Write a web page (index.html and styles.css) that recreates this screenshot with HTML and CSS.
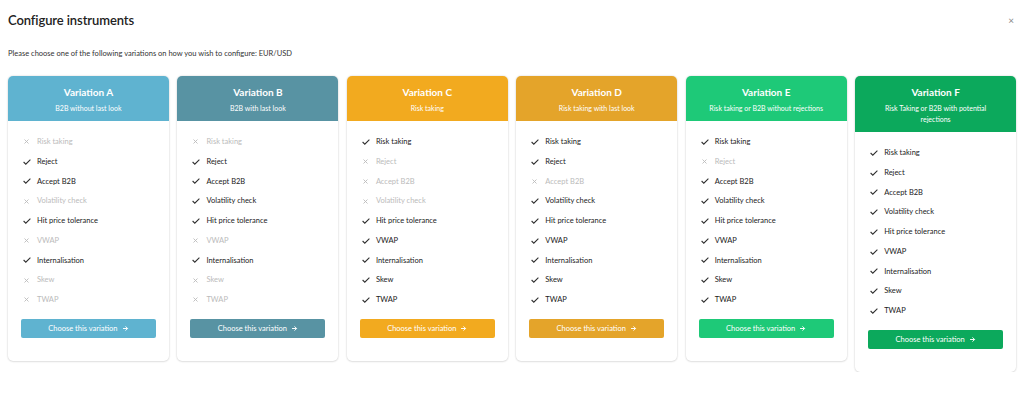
FILE: index.html
```html
<!DOCTYPE html>
<html>
<head>
<meta charset="utf-8">
<link rel="stylesheet" href="styles.css">
</head>
<body>
<div class="modal">
  <div class="top">
    <h1 class="title">Configure instruments</h1>
    <span class="close">×</span>
  </div>
  <p class="intro">Please choose one of the following variations on how you wish to configure: EUR/USD</p>
  <div class="cards">
    <div class="card a">
      <div class="head"><div class="name">Variation A</div><div class="desc">B2B without last look</div></div>
      <ul class="list">
        <li class="off">Risk taking</li><li>Reject</li><li>Accept B2B</li><li class="off">Volatility check</li><li>Hit price tolerance</li><li class="off">VWAP</li><li>Internalisation</li><li class="off">Skew</li><li class="off">TWAP</li>
      </ul>
      <button class="btn">Choose this variation <svg class="arr" viewBox="0 0 10 10"><path d="M1.5 5h6.5M5 2l3 3-3 3" fill="none" stroke="#fff" stroke-width="1.4"/></svg></button>
    </div>
    <div class="card b">
      <div class="head"><div class="name">Variation B</div><div class="desc">B2B with last look</div></div>
      <ul class="list">
        <li class="off">Risk taking</li><li>Reject</li><li>Accept B2B</li><li>Volatility check</li><li>Hit price tolerance</li><li class="off">VWAP</li><li>Internalisation</li><li class="off">Skew</li><li class="off">TWAP</li>
      </ul>
      <button class="btn">Choose this variation <svg class="arr" viewBox="0 0 10 10"><path d="M1.5 5h6.5M5 2l3 3-3 3" fill="none" stroke="#fff" stroke-width="1.4"/></svg></button>
    </div>
    <div class="card c">
      <div class="head"><div class="name">Variation C</div><div class="desc">Risk taking</div></div>
      <ul class="list">
        <li>Risk taking</li><li class="off">Reject</li><li class="off">Accept B2B</li><li class="off">Volatility check</li><li>Hit price tolerance</li><li>VWAP</li><li>Internalisation</li><li>Skew</li><li>TWAP</li>
      </ul>
      <button class="btn">Choose this variation <svg class="arr" viewBox="0 0 10 10"><path d="M1.5 5h6.5M5 2l3 3-3 3" fill="none" stroke="#fff" stroke-width="1.4"/></svg></button>
    </div>
    <div class="card d">
      <div class="head"><div class="name">Variation D</div><div class="desc">Risk taking with last look</div></div>
      <ul class="list">
        <li>Risk taking</li><li>Reject</li><li class="off">Accept B2B</li><li>Volatility check</li><li>Hit price tolerance</li><li>VWAP</li><li>Internalisation</li><li>Skew</li><li>TWAP</li>
      </ul>
      <button class="btn">Choose this variation <svg class="arr" viewBox="0 0 10 10"><path d="M1.5 5h6.5M5 2l3 3-3 3" fill="none" stroke="#fff" stroke-width="1.4"/></svg></button>
    </div>
    <div class="card e">
      <div class="head"><div class="name">Variation E</div><div class="desc">Risk taking or B2B without rejections</div></div>
      <ul class="list">
        <li>Risk taking</li><li class="off">Reject</li><li>Accept B2B</li><li>Volatility check</li><li>Hit price tolerance</li><li>VWAP</li><li>Internalisation</li><li>Skew</li><li>TWAP</li>
      </ul>
      <button class="btn">Choose this variation <svg class="arr" viewBox="0 0 10 10"><path d="M1.5 5h6.5M5 2l3 3-3 3" fill="none" stroke="#fff" stroke-width="1.4"/></svg></button>
    </div>
    <div class="card f">
      <div class="head"><div class="name">Variation F</div><div class="desc">Risk Taking or B2B with potential<br>rejections</div></div>
      <ul class="list">
        <li>Risk taking</li><li>Reject</li><li>Accept B2B</li><li>Volatility check</li><li>Hit price tolerance</li><li>VWAP</li><li>Internalisation</li><li>Skew</li><li>TWAP</li>
      </ul>
      <button class="btn">Choose this variation <svg class="arr" viewBox="0 0 10 10"><path d="M1.5 5h6.5M5 2l3 3-3 3" fill="none" stroke="#fff" stroke-width="1.4"/></svg></button>
    </div>
  </div>
</div>
</body>
</html>
```
FILE: styles.css
```css
* { box-sizing: border-box; }
body {
  margin: 0;
  background: #fff;
  font-family: Lato, "Open Sans", sans-serif;
  color: #222;
}
.modal { padding: 0 8px; }
.top {
  display: flex;
  justify-content: space-between;
  align-items: center;
  height: 40px;
}
.title {
  margin: 0;
  font-size: 13px;
  font-weight: 600;
  color: #222;
  letter-spacing: -0.1px;
}
.close {
  font-size: 10px;
  color: #888;
  margin-right: 2px;
}
.intro {
  margin: 8px 0 0;
  font-size: 7.5px;
  color: #333;
  line-height: 11px;
}
.cards {
  display: flex;
  gap: 8.6px;
  align-items: flex-start;
  margin-top: 17px;
}
.card {
  flex: 1;
  background: #fff;
  border-radius: 5px;
  box-shadow: 0 0 2px rgba(0,0,0,0.18), 0 1px 2px rgba(0,0,0,0.08);
  overflow: hidden;
  padding-bottom: 23px;
}
.head {
  color: #fff;
  text-align: center;
  padding: 9px 6px 7px;
}
.name {
  font-size: 10px;
  font-weight: 700;
  line-height: 14px;
}
.desc {
  font-size: 7px;
  line-height: 11px;
  margin-top: 4px;
}
.list {
  list-style: none;
  margin: 0;
  padding: 11px 0 0 15px;
}
.list li {
  font-size: 7.5px;
  line-height: 19.75px;
  height: 19.75px;
  color: #222;
  display: flex;
  align-items: center;
}
.list li::before {
  content: "";
  width: 8px;
  height: 6px;
  margin-right: 6px;
  background: no-repeat center/8px 6px url("data:image/svg+xml,%3Csvg xmlns='http://www.w3.org/2000/svg' viewBox='0 0 8 6'%3E%3Cpath d='M0.6 3l2.2 2.2 4.6-4.6' fill='none' stroke='%23333' stroke-width='1.1'/%3E%3C/svg%3E");
}
.list li.off { color: #bbb; }
.list li.off::before {
  width: 5px;
  height: 5px;
  margin-left: 1px;
  margin-right: 8px;
  background: no-repeat center/5px 5px url("data:image/svg+xml,%3Csvg xmlns='http://www.w3.org/2000/svg' viewBox='0 0 5 5'%3E%3Cpath d='M0.5 0.5l4 4M4.5 0.5l-4 4' fill='none' stroke='%23bbb' stroke-width='0.9'/%3E%3C/svg%3E");
}
.btn {
  display: flex;
  align-items: center;
  justify-content: center;
  margin: 9px 13px 0;
  width: calc(100% - 26px);
  height: 19px;
  border: 0;
  border-radius: 2px;
  color: #fff;
  font-family: inherit;
  font-size: 7.5px;
  padding: 0;
}
.arr { width: 7px; height: 7px; margin-left: 4px; }
.a .head, .a .btn { background: #5fb3d0; }
.b .head, .b .btn { background: #5893a3; }
.c .head, .c .btn { background: #f2aa1f; }
.d .head, .d .btn { background: #e4a42a; }
.e .head, .e .btn { background: #1ec978; }
.f .head, .f .btn { background: #0ca95c; }
```
